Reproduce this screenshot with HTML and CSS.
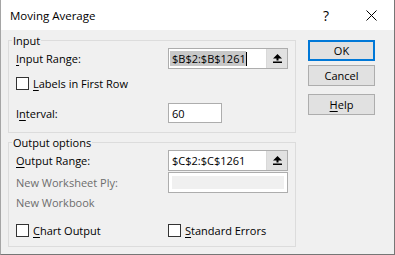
FILE: index.html
```html
<!DOCTYPE html>
<html lang="en">
<head>
  <meta charset="UTF-8" />
  <title>Moving Average</title>
  <link rel="stylesheet" href="styles.css">
</head>
<body>
  <div class="dialog">
    <div class="titlebar">
      <span class="title">Moving Average</span>
      <span class="caption-btn help-q">?</span>
      <span class="caption-btn">
        <svg width="11" height="11" viewBox="0 0 11 11"><path d="M0.5 0.5L10.5 10.5M10.5 0.5L0.5 10.5" stroke="#000" stroke-width="1" fill="none"/></svg>
      </span>
    </div>

    <div class="content">
      <div class="groups">
        <fieldset class="group group-input">
          <legend>Input</legend>
          <div class="row row-range">
            <span class="label"><u>I</u>nput Range:</span>
            <div class="range">
              <span class="range-text"><span class="sel">$B$2:$B$1261</span><span class="caret"></span></span>
              <span class="pick">
                <svg width="9" height="9" viewBox="0 0 9 9"><path d="M4.5 0L0 4.5H3.5V6.5H5.5V4.5H9Z M0 7.5H9V9H0Z" fill="#000"/></svg>
              </span>
            </div>
          </div>
          <div class="row row-check">
            <span class="box"></span><span><u>L</u>abels in First Row</span>
          </div>
          <div class="row row-interval">
            <span class="label">I<u>n</u>terval:</span>
            <div class="field field-small">60</div>
          </div>
        </fieldset>

        <fieldset class="group group-output">
          <legend>Output options</legend>
          <div class="row row-range">
            <span class="label"><u>O</u>utput Range:</span>
            <div class="range">
              <span class="range-text">$C$2:$C$1261</span>
              <span class="pick">
                <svg width="9" height="9" viewBox="0 0 9 9"><path d="M4.5 0L0 4.5H3.5V6.5H5.5V4.5H9Z M0 7.5H9V9H0Z" fill="#000"/></svg>
              </span>
            </div>
          </div>
          <div class="row row-ply">
            <span class="label disabled">New Worksheet Ply:</span>
            <div class="field field-disabled"></div>
          </div>
          <div class="row row-book">
            <span class="label disabled">New Workbook</span>
          </div>
          <div class="row row-check row-last">
            <span class="check-item"><span class="box"></span><span><u>C</u>hart Output</span></span>
            <span class="check-item"><span class="box"></span><span><u>S</u>tandard Errors</span></span>
          </div>
        </fieldset>
      </div>

      <div class="buttons">
        <button class="btn btn-default">OK</button>
        <button class="btn btn-cancel">Cancel</button>
        <button class="btn btn-help"><u>H</u>elp</button>
      </div>
    </div>
  </div>
</body>
</html>
```

FILE: styles.css
```css
body {
  margin: 0;
  background: #f0f0f0;
  font-family: "Open Sans", "Noto Sans", sans-serif;
  font-size: 11px;
  color: #000;
}

u {
  text-underline-offset: 2px;
}

.dialog {
  width: 395px;
  height: 255px;
  box-sizing: border-box;
  border: 1px solid #767676;
  border-top: none;
  border-left-color: #a5a5a5;
  background: #f0f0f0;
  display: flex;
  flex-direction: column;
}

.titlebar {
  height: 30px;
  background: #fff;
  display: flex;
  align-items: center;
}

.title {
  padding-left: 9px;
  font-size: 11.5px;
}

.caption-btn {
  width: 46px;
  height: 30px;
  display: flex;
  align-items: center;
  justify-content: center;
  box-sizing: border-box;
}

.help-q {
  margin-left: auto;
  padding-left: 2px;
  font-size: 14px;
}

.content {
  display: flex;
  padding-left: 7px;
}

.groups {
  width: 288px;
}

.group {
  margin: 0;
  min-width: 0;
  border: 1px solid #dcdcdc;
  padding: 0 7px 9px;
}

.group legend {
  line-height: 15px;
  padding: 0 1px;
  margin-left: -4px;
}

.group-input {
  margin-top: 3px;
}

.group-output {
  margin-top: 2px;
}

.row {
  display: flex;
  align-items: center;
}

.label {
  width: 152px;
  flex-shrink: 0;
}

.disabled {
  color: #6d6d6d;
}

.row-range {
  height: 21px;
}

.row-check {
  height: 13px;
  margin-top: 8px;
}

.row-interval {
  height: 20px;
  margin-top: 13px;
}

.row-ply {
  height: 21px;
  margin-top: 1px;
}

.row-book {
  height: 15px;
  margin-top: 2px;
}

.row-last {
  margin-top: 14px;
}

.check-item {
  display: flex;
  align-items: center;
}

.check-item:first-child {
  width: 152px;
  flex-shrink: 0;
}

.box {
  width: 13px;
  height: 13px;
  box-sizing: border-box;
  border: 1px solid #333;
  background: #fff;
  margin-right: 4px;
}

.range {
  width: 120px;
  height: 21px;
  box-sizing: border-box;
  border: 1px solid #adadad;
  background: #fff;
  display: flex;
}

.range-text {
  flex: 1;
  display: flex;
  align-items: center;
  padding-left: 3px;
}

.sel {
  background: #c8c8c8;
  margin-left: -2px;
  padding-left: 2px;
}

.caret {
  width: 1px;
  height: 14px;
  background: #000;
}

.pick {
  width: 20px;
  background: #e1e1e1;
  border-left: 1px solid #d9d9d9;
  display: flex;
  align-items: center;
  justify-content: center;
}

.field {
  height: 20px;
  box-sizing: border-box;
  border: 1px solid #adadad;
  background: #fff;
  display: flex;
  align-items: center;
  padding-left: 3px;
}

.field-small {
  width: 54px;
}

.field-disabled {
  width: 120px;
  height: 21px;
  background: #f0f0f0;
  box-shadow: inset 0 0 0 3px #fff;
}

.buttons {
  margin-left: 12px;
  padding-top: 10px;
  display: flex;
  flex-direction: column;
}

.btn {
  width: 67px;
  height: 21px;
  box-sizing: border-box;
  border: 1px solid #adadad;
  background: #e1e1e1;
  font-family: inherit;
  font-size: 11px;
  color: #000;
  padding: 0;
}

.btn-default {
  border: 2px solid #0078d7;
}

.btn-cancel {
  margin-top: 4px;
}

.btn-help {
  margin-top: 8px;
}
```
